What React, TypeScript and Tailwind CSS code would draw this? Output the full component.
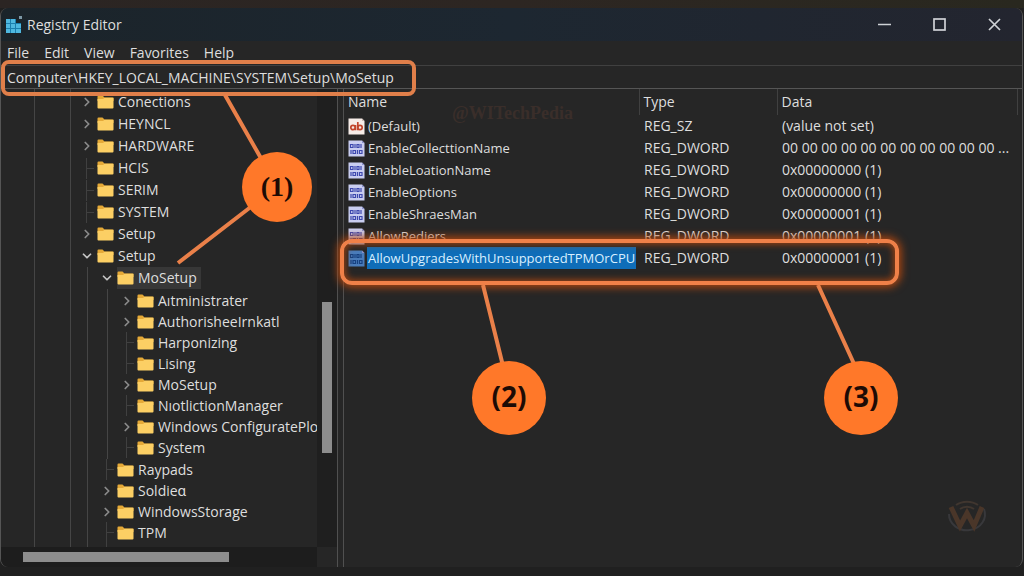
import { ChevronDown, ChevronRight } from 'lucide-react';

type TreeItem = {
  label: string;
  state?: 'open' | 'closed';
  selected?: boolean;
  children?: TreeItem[];
};

const tree: TreeItem[] = [
  { label: 'Conections', state: 'closed' },
  { label: 'HEYNCL', state: 'closed' },
  { label: 'HARDWARE', state: 'closed' },
  { label: 'HCIS' },
  { label: 'SERIM' },
  { label: 'SYSTEM' },
  { label: 'Setup', state: 'closed' },
  {
    label: 'Setup',
    state: 'open',
    children: [
      {
        label: 'MoSetup',
        state: 'open',
        selected: true,
        children: [
          { label: 'Aıtministrater', state: 'closed' },
          { label: 'AuthorisheeIrnkatl', state: 'closed' },
          { label: 'Harponizing' },
          { label: 'Lising' },
          { label: 'MoSetup', state: 'closed' },
          { label: 'NıotlictionManager' },
          { label: 'Windows ConfiguratePlot', state: 'closed' },
          { label: 'System' },
        ],
      },
      { label: 'Raypads' },
      { label: 'Soldieɑ', state: 'closed' },
      { label: 'WindowsStorage', state: 'closed' },
      { label: 'TPM' },
      { label: '' },
    ],
  },
];

const values = [
  { name: '(Default)', type: 'REG_SZ', data: '(value not set)' },
  { name: 'EnableCollecttionName', type: 'REG_DWORD', data: '00 00 00 00 00 00 00 00 00 00 00 ...' },
  { name: 'EnableLoationName', type: 'REG_DWORD', data: '0x00000000 (1)' },
  { name: 'EnableOptions', type: 'REG_DWORD', data: '0x00000000 (1)' },
  { name: 'EnableShraesMan', type: 'REG_DWORD', data: '0x00000001 (1)' },
  { name: 'AllowRediers', type: 'REG_DWORD', data: '0x00000001 (1)' },
  { name: 'AllowUpgradesWithUnsupportedTPMOrCPU', type: 'REG_DWORD', data: '0x00000001 (1)', selected: true },
];

const menus = ['File', 'Edit', 'View', 'Favorites', 'Help'];

const AppIcon = () => (
  <svg width="18" height="18" viewBox="0 0 18 18" className="shrink-0">
    <path d="M1 3h10v4h5v10H1z" fill="#1b7fae" />
    <g fill="#4fb8e0">
      <rect x="1" y="3" width="4" height="4" />
      <rect x="6" y="3" width="4" height="4" />
      <rect x="1" y="8" width="4" height="4" />
      <rect x="6" y="8" width="4" height="4" />
      <rect x="11" y="8" width="5" height="4" />
      <rect x="1" y="13" width="4" height="4" />
      <rect x="6" y="13" width="4" height="4" />
      <rect x="11" y="13" width="5" height="4" />
    </g>
    <rect x="14" y="0" width="3" height="3" fill="#7d98a6" />
  </svg>
);

const Folder = () => (
  <svg width="17" height="14" viewBox="0 0 17 14" className="shrink-0">
    <path d="M0.5 1.5Q0.5 0.5 1.5 0.5H5.5L7.5 2.5H15.5Q16.5 2.5 16.5 3.5V6H0.5Z" fill="#e5a937" />
    <path d="M0.5 4H6L7.5 2.8H16.5V12.5Q16.5 13.5 15.5 13.5H1.5Q0.5 13.5 0.5 12.5Z" fill="#fccf64" />
  </svg>
);

const ValueIcon = ({ text, selected }: { text?: boolean; selected?: boolean }) => (
  <svg width="17" height="17" viewBox="0 0 17 17" className="shrink-0">
    <path d="M0.5 0.5H14L16.5 3V16.5H0.5Z" fill={text ? '#f6ece8' : selected ? '#4a7cba' : '#c9cdf0'} />
    <path d="M14 0.5V3H16.5Z" fill={text ? '#c9b7b0' : '#8a90c8'} />
    {text ? (
      <g fill="none" stroke="#c2452c" strokeWidth="1.7">
        <circle cx="5" cy="9.5" r="2.2" />
        <path d="M7.5 7V12.3M9.8 4V12.3" />
        <circle cx="12" cy="9.5" r="2.2" />
      </g>
    ) : (
      <g fill="none" stroke={selected ? '#16407f' : '#3d48ae'} strokeWidth="1.2">
        <path d="M2.5 4.5H5V7.5H2.5ZM7 4V8M9 4.5H11V7.5H9ZM13 4V8" />
        <path d="M3 10V14M5 10.5H7.5V13.5H5ZM9.5 10V14M11.5 10.5H14V13.5H11.5Z" />
      </g>
    )}
  </svg>
);

const Toggle = ({ state }: { state?: 'open' | 'closed' }) => {
  if (!state) {
    return (
      <svg width="20" height="21" viewBox="0 0 20 21" className="shrink-0" stroke="#404040">
        <path d="M9.5 0V21M10 10.5H17" />
      </svg>
    );
  }
  const Icon = state === 'open' ? ChevronDown : ChevronRight;
  return (
    <button
      aria-label={state === 'open' ? 'Collapse' : 'Expand'}
      className={`flex w-5 shrink-0 justify-center ${state === 'open' ? 'text-[#c4c4c4]' : 'text-[#8a8a8a]'}`}
    >
      <Icon size={14} strokeWidth={3} />
    </button>
  );
};

const TreeList = ({ items, depth = 0 }: { items: TreeItem[]; depth?: number }) => (
  <ul className={depth === 0 ? 'pl-[6px]' : depth === 1 ? 'ml-[10px] border-l border-[#454545] pl-[9px]' : 'ml-[10px] border-l border-[#454545] py-px pl-[9px]'}>
    {items.map((item, i) => (
      <li key={i}>
        <div className={`flex items-center ${depth === 0 || item.selected ? 'h-[22px]' : 'h-[21px]'}`}>
          <Toggle state={item.state} />
          <div className={`flex h-full items-center gap-1 pr-1 ${item.selected ? 'bg-[#373737]' : ''}`}>
            <Folder />
            <span className="whitespace-nowrap">{item.label}</span>
          </div>
        </div>
        {item.children && <TreeList items={item.children} depth={depth + 1} />}
      </li>
    ))}
  </ul>
);

const Annotations = () => (
  <div className="pointer-events-none absolute inset-0 z-10 overflow-hidden">
    <div className="absolute top-[60px] left-px h-9 w-[415px] rounded-lg border-4 border-[#e07f4a]" />
    <div className="absolute top-[239px] left-[340px] h-[46px] w-[559px] rounded-xl border-4 border-[#f08048] shadow-[0_0_8px_2px_#b5480f,inset_0_0_7px_1px_#a8440f]" />
    <svg className="absolute top-0 left-0" width="1024" height="576" fill="none" stroke="#ea8049" strokeWidth="4">
      <path d="M225 95L262 160M252 206L178 263M483 285L503 366M818 285L855 366" />
    </svg>
    <div className="absolute top-[152px] left-[242px] flex size-[70px] items-center justify-center rounded-full bg-[#ff7829] font-['Liberation_Serif',serif] text-[28px] font-bold text-[#1d0b05]">
      (1)
    </div>
    <div className="absolute top-[361px] left-[472px] flex size-[74px] items-center justify-center rounded-full bg-[#ff7829] pb-1 text-[28px] font-bold text-[#1d0b05]">
      (2)
    </div>
    <div className="absolute top-[361px] left-[824px] flex size-[74px] items-center justify-center rounded-full bg-[#ff7829] pb-1 text-[28px] font-bold text-[#1d0b05]">
      (3)
    </div>
    <div className="absolute top-[99px] left-[452px] font-['Liberation_Serif',serif] text-lg font-bold text-[#3a2e2a]">
      @WITechPedia
    </div>
    <svg className="absolute top-[500px] left-[946px]" width="42" height="35" viewBox="0 0 42 35" fill="none">
      <path d="M3 14A18 16 0 1 0 38 9" stroke="#38383b" strokeWidth="2" />
      <path d="M10 5A17 14 0 0 1 32 5M14 9A10 8 0 0 1 28 9" stroke="#40362f" strokeWidth="2" />
      <path d="M5 7L14 26L21 13L28 26L36 7" stroke="#4a3629" strokeWidth="5" />
    </svg>
  </div>
);

const App = () => {
  return (
    <div className="relative flex h-screen flex-col overflow-hidden bg-[#202020] font-['Open_Sans','Noto_Sans',sans-serif] text-sm text-[#dedede]">
      <div className="h-2 shrink-0 bg-linear-to-r from-[#2b2523] via-[#2d2622] to-[#29281f]" />

      <main className="mr-px mb-[9px] flex min-h-0 flex-1 flex-col rounded-lg border-x border-[#555555] bg-[#262626]">
        <header className="flex h-[33px] shrink-0 items-center rounded-t-lg bg-linear-to-r from-[#1b242a] via-[#1d2731] to-[#23252f] pl-1">
          <AppIcon />
          <h1 className="ml-1 flex-1">Registry Editor</h1>
          <button aria-label="Minimize" className="flex h-full w-[55px] items-center justify-center">
            <svg width="13" height="13" stroke="#cfd2d6" strokeWidth="1.5"><path d="M0 6.5H13" /></svg>
          </button>
          <button aria-label="Maximize" className="flex h-full w-[55px] items-center justify-center">
            <svg width="13" height="13" fill="none" stroke="#cfd2d6" strokeWidth="1.7"><rect x="1" y="1" width="11" height="11" /></svg>
          </button>
          <button aria-label="Close" className="flex h-full w-[55px] items-center justify-center">
            <svg width="13" height="13" stroke="#cfd2d6" strokeWidth="1.7"><path d="M1 1L12 12M12 1L1 12" /></svg>
          </button>
        </header>

        <nav className="flex h-6 shrink-0 items-center gap-[15px] pl-[6px]">
          {menus.map((menu) => (
            <button key={menu}>{menu}</button>
          ))}
        </nav>

        <input
          aria-label="Address"
          defaultValue="Computer\HKEY_LOCAL_MACHINE\SYSTEM\Setup\MoSetup"
          className="h-6 w-full shrink-0 border-y border-t-[#404040] border-b-[#555555] bg-transparent pl-[6px] outline-none"
        />

        <div className="flex min-h-0 flex-1">
          <aside className="flex w-[343px] shrink-0 border-r border-[#505050]">
            <div className="flex min-w-0 flex-1 flex-col">
              <div className="flex min-h-0 flex-1 overflow-hidden">
                <div className="w-[34px] shrink-0 border-r border-[#454545]" />
                <div className="w-9 shrink-0 border-r border-[#454545]" />
                <div className="min-w-0 flex-1 overflow-hidden pt-[2px]">
                  <TreeList items={tree} />
                </div>
              </div>
              <div className="h-5 shrink-0 rounded-bl-lg bg-[#1d1d1d] py-[5px] pl-[22px]">
                <div className="h-[10px] w-[206px] bg-[#8d8d8d]" />
              </div>
            </div>
            <div className="mb-5 w-[20px] shrink-0 bg-[#1f1f1f] pt-[213px] pl-[5px]">
              <div className="h-[151px] w-[10px] bg-[#8d8d8d]" />
            </div>
            <div className="mr-[5px] w-px shrink-0 bg-[#505050]" />
          </aside>

          <section className="min-w-0 flex-1">
            <table className="w-full table-fixed border-collapse text-left whitespace-nowrap">
              <colgroup>
                <col className="w-[295px]" />
                <col className="w-[138px]" />
                <col />
                <col className="w-[5px]" />
              </colgroup>
              <thead>
                <tr className="h-[26px]">
                  <th className="border-r border-[#404040] p-0 pl-1 font-normal">Name</th>
                  <th className="border-r border-[#404040] p-0 pl-1 font-normal">Type</th>
                  <th className="border-r border-[#404040] p-0 pl-1 font-normal">Data</th>
                  <th className="p-0" />
                </tr>
              </thead>
              <tbody>
                {values.map((value) => (
                  <tr key={value.name} className="h-[22px]">
                    <td className="p-0 pl-1">
                      <div className="flex items-center gap-[2px] text-[13px]">
                        <ValueIcon text={value.type === 'REG_SZ'} selected={value.selected} />
                        <span className={`h-[22px] px-px leading-[22px] ${value.selected ? 'bg-[#0f6db8] text-[#d9efff]' : ''}`}>
                          {value.name}
                        </span>
                      </div>
                    </td>
                    <td className="p-0 pl-[5px]">{value.type}</td>
                    <td className="p-0 pl-[5px]">{value.data}</td>
                    <td className="p-0" />
                  </tr>
                ))}
              </tbody>
            </table>
          </section>
        </div>
      </main>

      <Annotations />
    </div>
  );
};

export default App;
